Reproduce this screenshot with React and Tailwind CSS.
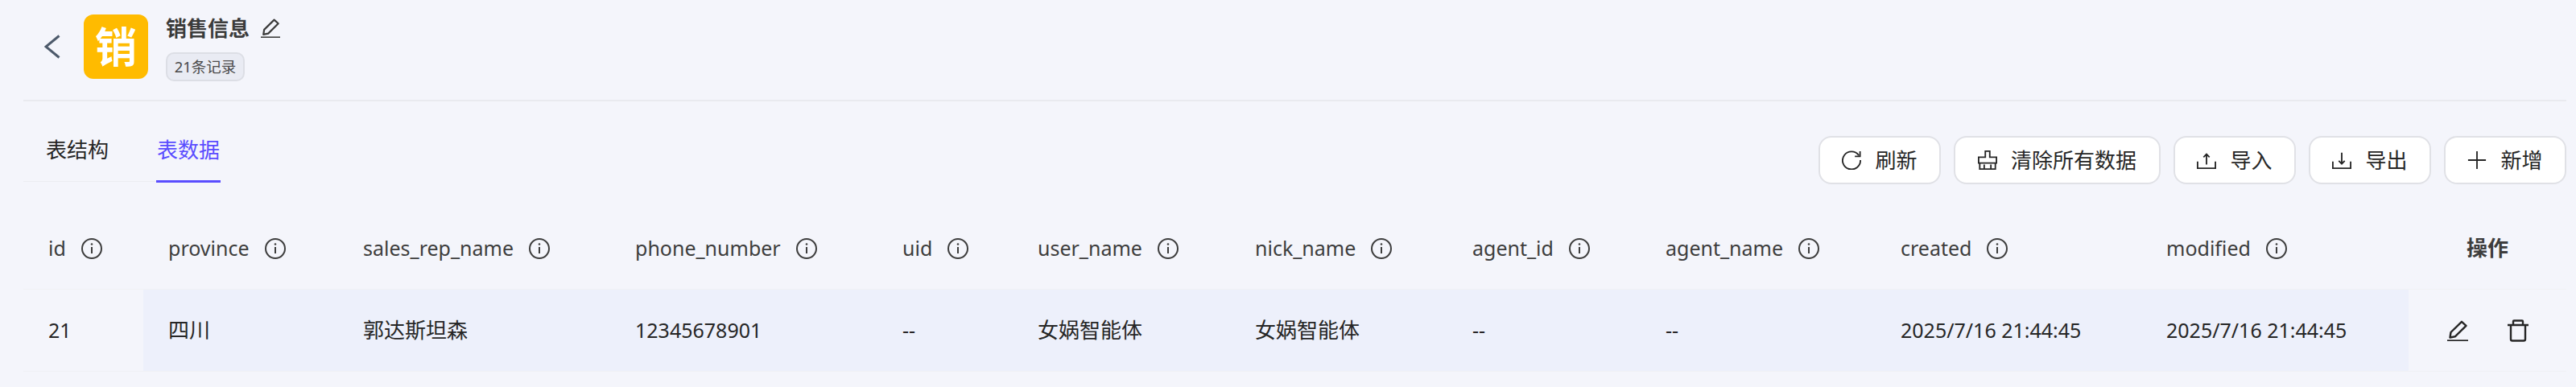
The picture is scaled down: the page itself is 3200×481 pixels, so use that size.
import React from 'react';

const fontStack = "font-['Noto_Sans','Noto_Sans_CJK_SC',sans-serif]";

const columns = [
  { key: 'id', width: 'w-[149px]', value: '21', sticky: true },
  { key: 'province', width: 'w-[242px]', value: '四川', cjk: true },
  { key: 'sales_rep_name', width: 'w-[338px]', value: '郭达斯坦森', cjk: true },
  { key: 'phone_number', width: 'w-[332px]', value: '12345678901' },
  { key: 'uid', width: 'w-[168px]', value: '--' },
  { key: 'user_name', width: 'w-[270px]', value: '女娲智能体', cjk: true },
  { key: 'nick_name', width: 'w-[270px]', value: '女娲智能体', cjk: true },
  { key: 'agent_id', width: 'w-[240px]', value: '--' },
  { key: 'agent_name', width: 'w-[292px]', value: '--' },
  { key: 'created', width: 'w-[330px]', value: '2025/7/16 21:44:45' },
  { key: 'modified', width: 'w-[332px]', value: '2025/7/16 21:44:45' },
];

function Pencil({ className }) {
  return (
    <svg viewBox="0 0 26 26" fill="none" stroke="currentColor" strokeWidth="2.4" className={className}>
      <path d="M4.500 15 18 1.800l5.500 5L10 20.200l-6.500 1.300z" strokeLinejoin="round" />
      <path d="M0 25.500h26" />
    </svg>
  );
}

function Trash({ className }) {
  return (
    <svg viewBox="0 0 26 28" fill="none" stroke="currentColor" strokeWidth="2.400" className={className}>
      <path d="M0 7h26M7 7V2.500a1 1 0 0 1 1-1h10a1 1 0 0 1 1 1V7M4 7v17.500a2 2 0 0 0 2 2h14a2 2 0 0 0 2-2V7" strokeLinejoin="round" />
    </svg>
  );
}

function Info() {
  return (
    <svg viewBox="0 0 26 26" fill="none" stroke="#3d3d3d" className="ml-[19px] h-[26px] w-[26px] shrink-0">
      <circle cx="13" cy="13" r="12" strokeWidth="2" />
      <path d="M13 11v8" strokeWidth="2" />
      <circle cx="13" cy="7.500" r="1.300" fill="#3d3d3d" stroke="none" />
    </svg>
  );
}

const buttons = [
  {
    label: '刷新',
    width: 'w-[152px]',
    icon: <path d="M22.800 6.500A12 12 0 1 0 25 13M24.500 1v7h-7" />,
  },
  {
    label: '清除所有数据',
    width: 'w-[257px]',
    icon: <path d="M10 1h6v8h9v8H1V9h9zM2.500 17v8h21v-8M8.500 19v6M17.500 19v6" />,
  },
  { label: '导入', width: 'w-[152px]', icon: <path d="M1 15v9h24v-9M13 19V5M9 9l4-4 4 4" /> },
  { label: '导出', width: 'w-[152px]', icon: <path d="M1 15v9h24v-9M13 3v15M9 14l4 4 4-4" /> },
  { label: '新增', width: 'w-[152px]', icon: <path d="M13 1v24M1 13h24" /> },
];

export default function App() {
  return (
    <div className={`h-[481px] w-[3200px] overflow-hidden bg-[#f4f5fb] pl-[29px] pr-[12px] text-[26px] text-[#262626] ${fontStack}`}>
      <div className="flex h-[126px] border-b-2 border-[#e9eaef] pt-[18px]">
        <div className="flex h-[80px] w-[75px] items-center pl-[26px]">
          <svg viewBox="0 0 20 30" fill="none" stroke="#4d5a6b" strokeWidth="3" className="h-[30px] w-[20px]">
            <path d="M18.500 1.500 2 15l16.500 13.500" />
          </svg>
        </div>
        <div className="flex h-[80px] w-[80px] items-center justify-center rounded-[12px] bg-[#ffbb00] text-[52px] font-bold text-white">销</div>
        <div className="ml-[22px]">
          <div className="flex h-[34px] items-center font-bold leading-none text-[#3b3b3b]">
            销售信息
            <Pencil className="ml-[14px] h-[24px] w-[24px] text-[#3b3b3b]" />
          </div>
          <div className="mt-[13px] flex h-[36px] w-[98px] items-center justify-center rounded-[10px] border-2 border-[#dcdee5] bg-[#e9ebf3] text-[18.500px] text-[#4a4a4a]">21条记录</div>
        </div>
      </div>

      <div className="flex h-[122px] items-start justify-between">
        <div className="mt-[34px] flex h-[66px] w-[245px] items-start border-b border-[#ecedf1] pl-[28px] leading-[36px]">
          <span className="w-[137px] pt-[8px]">表结构</span>
          <span className="relative h-[66px] w-[80px] pl-[1px] pt-[8px] text-[#5a4dff]">
            表数据
            <span className="absolute bottom-[-1px] left-0 h-[3px] w-[80px] bg-[#5a4dff]" />
          </span>
        </div>
        <div className="mt-[43px] flex gap-[16px]">
          {buttons.map((b) => (
            <button key={b.label} type="button" className={`flex h-[60px] items-center justify-center gap-[17px] rounded-[16px] border-2 border-[#e0e1e6] bg-white ${b.width}`}>
              <svg viewBox="0 0 26 26" fill="none" stroke="currentColor" strokeWidth="2" className="h-[24px] w-[24px]">{b.icon}</svg>
              {b.label}
            </button>
          ))}
        </div>
      </div>

      <div className="flex h-[111px] items-center pt-[10px] text-[#3d3d3d]">
        {columns.map((c) => (
          <div key={c.key} className={`flex items-center pl-[31px] text-[25px] ${c.width}`}>
            {c.key}
            <Info />
          </div>
        ))}
        <div className="w-[196px] text-center font-bold">操作</div>
      </div>

      <div className="flex h-[103px] items-center border-y border-[#f0f1f5]">
        {columns.map((c) => (
          <div key={c.key} className={`flex h-full items-center pl-[31px] ${c.cjk ? '' : 'text-[25px]'} ${c.width} ${c.sticky ? '' : 'bg-[#edf0fb]'}`}>
            {c.value}
          </div>
        ))}
        <div className="flex w-[196px] items-center gap-[49px] pl-[48px] text-[#262626]">
          <Pencil className="h-[26px] w-[26px]" />
          <Trash className="h-[28px] w-[26px]" />
        </div>
      </div>
    </div>
  );
}
